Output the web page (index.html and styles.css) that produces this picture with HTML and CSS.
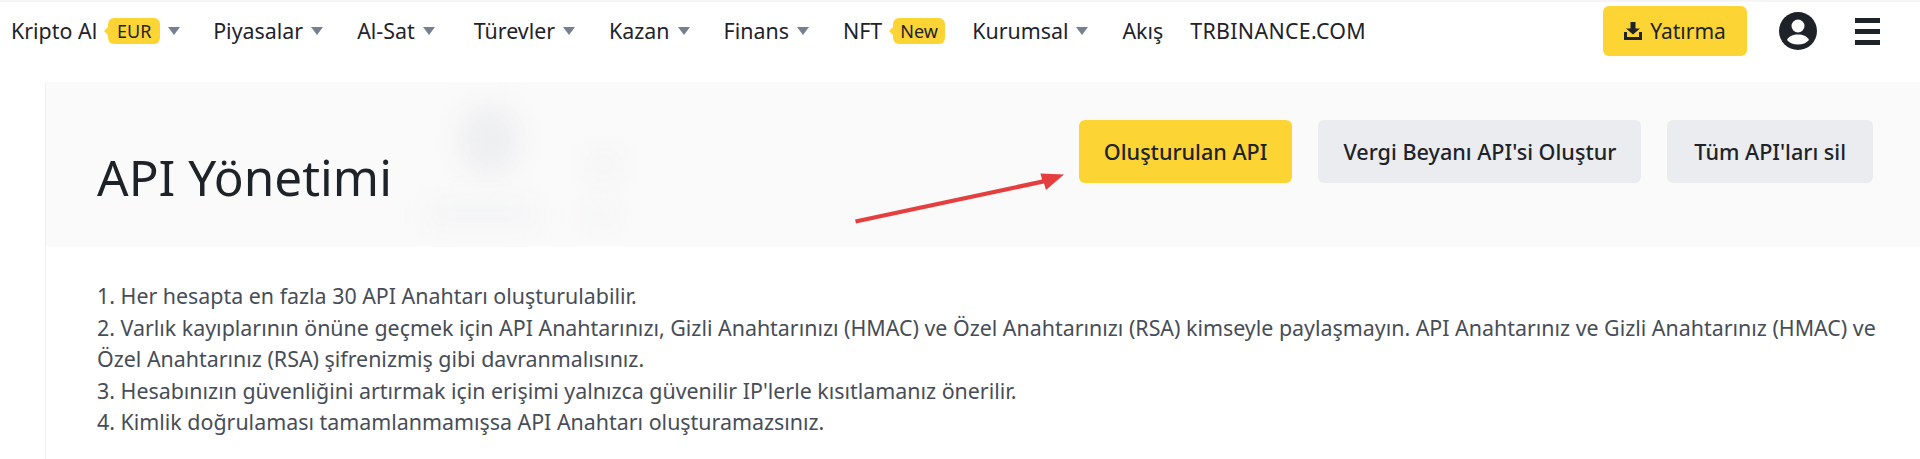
FILE: index.html
```html
<!DOCTYPE html>
<html lang="tr">
<head>
    <meta charset="UTF-8">
    <title>API Yönetimi</title>
    <link rel="stylesheet" href="styles.css">
</head>
<body>
    <div class="header">
        <div class="nav">
            <div class="nav-item nav-first">Kripto Al<span class="badge badge-eur">EUR</span><span class="caret"></span></div>
            <div class="nav-item">Piyasalar<span class="caret"></span></div>
            <div class="nav-item nav-sat">Al-Sat<span class="caret"></span></div>
            <div class="nav-item">Türevler<span class="caret"></span></div>
            <div class="nav-item">Kazan<span class="caret"></span></div>
            <div class="nav-item">Finans<span class="caret"></span></div>
            <div class="nav-item">NFT<span class="badge badge-new">New</span></div>
            <div class="nav-item">Kurumsal<span class="caret"></span></div>
            <div class="nav-item nav-short">Akış</div>
            <div class="nav-item nav-domain">TRBINANCE.COM</div>
        </div>
        <div class="nav-right">
            <div class="deposit">
                <svg class="deposit-icon" viewBox="0 0 18 18"><path d="M6.500 0h5v6.500H16L9 12.500 2 6.500h4.500z"/><path d="M0 10h3v5h12v-5h3v8H0z"/></svg>
                Yatırma
            </div>
            <svg class="avatar" viewBox="0 0 38 38"><circle cx="19" cy="19" r="19" fill="#1e2329"/><circle cx="19" cy="14" r="6.500" fill="#fff"/><path d="M8 28c2-4 6-5.500 11-5.500s9 1.500 11 5.500c-2.500 3-6.500 4.500-11 4.500S10.500 31 8 28z" fill="#fff"/></svg>
            <div class="menu"><span></span><span></span><span></span></div>
        </div>
    </div>

    <div class="main">
        <div class="page-head">
            <div class="blur-blob blob-1"></div>
            <div class="blur-blob blob-2"></div>
            <div class="blur-blob blob-3"></div>
            <div class="blur-blob blob-4"></div>
            <h1>API Yönetimi</h1>
            <div class="actions">
                <div class="btn btn-primary">Oluşturulan API</div>
                <div class="btn">Vergi Beyanı API'si Oluştur</div>
                <div class="btn btn-last">Tüm API'ları sil</div>
            </div>
            <svg class="arrow" viewBox="0 0 220 60"><path d="M3 53.500 190 13.500l-1.500-6L212 8.500 194 24l-2-6.500L4 57.500z" fill="#e53e3e"/></svg>
        </div>
        <div class="notes">
            <p>1. Her hesapta en fazla 30 API Anahtarı oluşturulabilir.</p>
            <p>2. Varlık kayıplarının önüne geçmek için API Anahtarınızı, Gizli Anahtarınızı (HMAC) ve Özel Anahtarınızı (RSA) kimseyle paylaşmayın. API Anahtarınız ve Gizli Anahtarınız (HMAC) ve Özel Anahtarınız (RSA) şifrenizmiş gibi davranmalısınız.</p>
            <p>3. Hesabınızın güvenliğini artırmak için erişimi yalnızca güvenilir IP'lerle kısıtlamanız önerilir.</p>
            <p>4. Kimlik doğrulaması tamamlanmamışsa API Anahtarı oluşturamazsınız.</p>
        </div>
    </div>
</body>
</html>
```

FILE: styles.css
```css
* {
    margin: 0;
    padding: 0;
    box-sizing: border-box;
}

body {
    font-family: 'Noto Sans', 'Liberation Sans', sans-serif;
    background: #fff;
    color: #1e2329;
    height: 459px;
    overflow: hidden;
}

.header {
    height: 82px;
    border-top: 2px solid #f5f5f5;
    display: flex;
    justify-content: space-between;
    padding: 4px 40px 0 11px;
}

.nav {
    display: flex;
    align-items: flex-start;
    padding-top: 12px;
    font-size: 21.4px;
    line-height: 26px;
}

.nav-item {
    display: flex;
    align-items: center;
    margin-right: 34px;
}

.nav-first {
    margin-right: 33px;
}

.nav-sat {
    margin-right: 39px;
}

.nav-short {
    margin-right: 27px;
}

.nav-domain {
    letter-spacing: 0.3px;
}

.badge {
    position: relative;
    display: block;
    height: 26px;
    line-height: 26px;
    background: #fcd535;
    border-radius: 6px;
    font-size: 18px;
    text-align: center;
    margin-left: 11px;
}

.badge::before {
    content: '';
    position: absolute;
    left: -4px;
    top: 9px;
    border-top: 4px solid transparent;
    border-bottom: 4px solid transparent;
    border-right: 4px solid #fcd535;
}

.badge-eur {
    width: 52px;
}

.badge-new {
    width: 52px;
    margin-right: -7px;
}

.caret {
    width: 0;
    height: 0;
    margin-left: 8px;
    border-left: 6px solid transparent;
    border-right: 6px solid transparent;
    border-top: 8px solid #76808f;
}

.nav-right {
    display: flex;
    align-items: flex-start;
}

.deposit {
    width: 144px;
    height: 50px;
    background: #fcd535;
    border-radius: 6px;
    display: flex;
    align-items: center;
    justify-content: center;
    gap: 8px;
    font-size: 21px;
}

.deposit-icon {
    width: 18px;
    height: 18px;
    fill: #1e2329;
}

.avatar {
    width: 38px;
    height: 38px;
    margin: 6px 0 0 32px;
}

.menu {
    width: 25px;
    margin: 12px 0 0 38px;
    display: flex;
    flex-direction: column;
    gap: 6px;
}

.menu span {
    height: 5px;
    background: #1e2329;
}

.main {
    margin-left: 45px;
    border-left: 1px solid #f0f1f2;
    height: 377px;
}

.page-head {
    position: relative;
    height: 165px;
    background: #fafafa;
    display: flex;
    justify-content: space-between;
    padding: 38px 47px 0 51px;
    overflow: hidden;
}

.page-head h1 {
    position: relative;
    font-size: 49.5px;
    font-weight: 400;
    line-height: 64px;
    margin-top: 25px;
}

.actions {
    position: relative;
    display: flex;
    gap: 26px;
}

.btn {
    height: 63px;
    line-height: 63px;
    padding: 0 25px;
    background: #eaecef;
    border-radius: 6px;
    font-size: 21.6px;
    font-weight: 500;
}

.btn-primary {
    background: #fcd535;
}

.btn-last {
    padding: 0 27px;
}

.arrow {
    position: absolute;
    left: 806px;
    top: 84px;
    width: 220px;
    height: 60px;
}

.blur-blob {
    position: absolute;
    background: #eeeff1;
    filter: blur(12px);
}

.blob-1 {
    left: 412px;
    top: 22px;
    width: 62px;
    height: 72px;
    border-radius: 50%;
}

.blob-2 {
    left: 540px;
    top: 70px;
    width: 36px;
    height: 26px;
    border-radius: 50%;
    background: #f2f3f4;
}

.blob-3 {
    left: 380px;
    top: 120px;
    width: 110px;
    height: 24px;
    background: #f3f4f5;
}

.blob-4 {
    left: 540px;
    top: 122px;
    width: 30px;
    height: 20px;
    background: #f3f4f5;
}

.notes {
    padding: 33px 43px 0 51px;
    font-size: 21.4px;
    line-height: 31.5px;
    color: #474d57;
}
```
